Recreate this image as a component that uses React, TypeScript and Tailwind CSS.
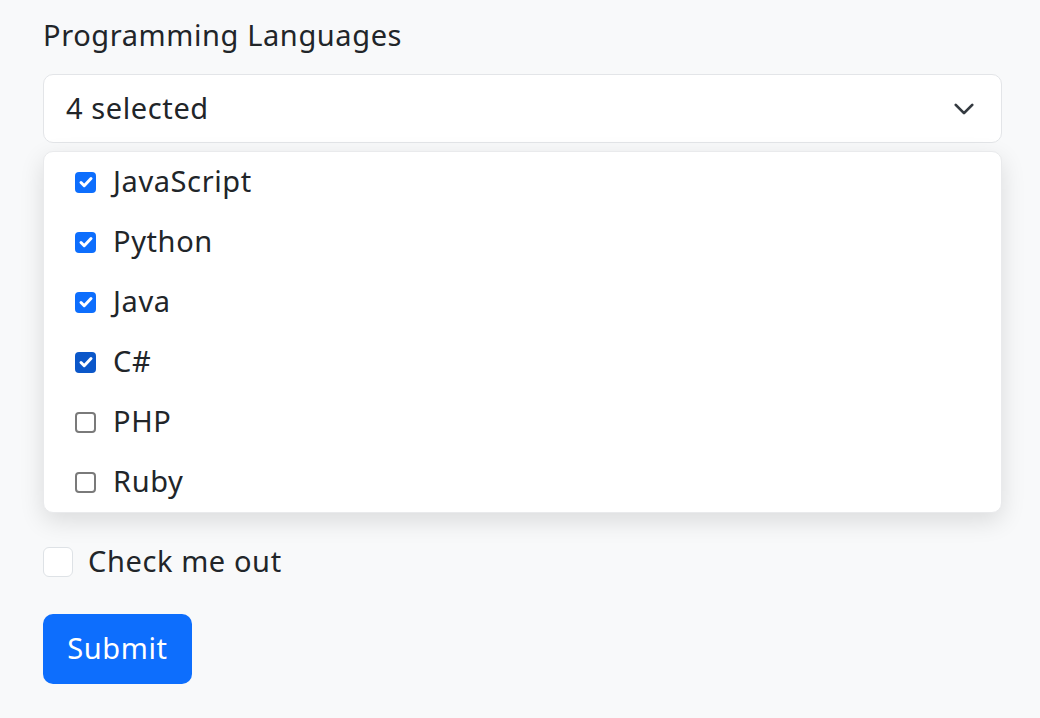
import React from 'react';

type Lang = { name: string; checked: boolean; focus?: boolean };

const LANGS: Lang[] = [
  { name: 'JavaScript', checked: true },
  { name: 'Python', checked: true },
  { name: 'Java', checked: true },
  { name: 'C#', checked: true, focus: true },
  { name: 'PHP', checked: false },
  { name: 'Ruby', checked: false },
];

function Box({ checked, focus }: { checked: boolean; focus?: boolean }) {
  if (!checked) {
    return <span className="w-[21px] h-[21px] rounded-[4px] border-2 border-[#7a7a7a] bg-white flex-shrink-0" />;
  }
  return (
    <span
      className={`w-[21px] h-[21px] rounded-[4px] flex items-center justify-center flex-shrink-0 ${
        focus ? 'bg-[#0b57c9]' : 'bg-[#0d6efd]'
      }`}
    >
      <svg className="w-[16px] h-[16px]" viewBox="0 0 16 16" fill="none" stroke="white" strokeWidth={3} strokeLinecap="round" strokeLinejoin="round">
        <path d="M3 8.5l3.2 3.2L13 4.5" />
      </svg>
    </span>
  );
}

export default function App() {
  return (
    <div className="min-h-[718px] bg-[#f8f9fa] px-[43px] pt-[13px] text-[#212529] font-['Noto_Sans',sans-serif] tracking-[0.6px]">
      <label className="block text-[29px] leading-[44px] mb-[17px]">Programming Languages</label>

      {/* select */}
      <div className="w-[959px] h-[69px] bg-white border border-[#e3e5e8] rounded-[10px] flex items-center justify-between pl-[22px] pr-[26px]">
        <span className="text-[29px] -mt-[2px]">4 selected</span>
        <svg className="w-[22px] h-[22px]" viewBox="0 0 16 16" fill="none" stroke="#343a40" strokeWidth={2} strokeLinecap="round" strokeLinejoin="round">
          <path d="M2 5l6 6 6-6" />
        </svg>
      </div>

      {/* dropdown */}
      <ul className="mt-[8px] w-[959px] bg-white border border-[#e9eaec] rounded-[10px] shadow-[0_8px_24px_rgba(0,0,0,0.12)]">
        {LANGS.map((l) => (
          <li key={l.name} className="h-[60px] flex items-center pl-[31px] gap-[17px]">
            <Box checked={l.checked} focus={l.focus} />
            <span className="text-[29px] -mt-[3px]">{l.name}</span>
          </li>
        ))}
      </ul>

      {/* check me out */}
      <div className="mt-[29px] flex items-center gap-[15px]">
        <span className="w-[30px] h-[30px] bg-white border border-[#dee2e6] rounded-[6px]" />
        <span className="text-[29px] -mt-[3px]">Check me out</span>
      </div>

      <button className="mt-[31px] w-[149px] h-[70px] bg-[#0d6efd] text-white text-[29px] rounded-[10px] flex items-center justify-center">
        <span className="-mt-[2px]">Submit</span>
      </button>
    </div>
  );
}
